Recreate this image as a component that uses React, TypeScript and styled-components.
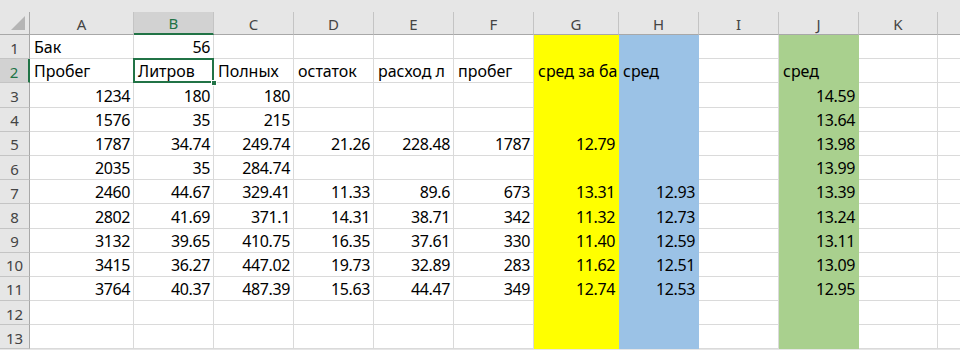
import React from "react";
import styled, { createGlobalStyle, css } from "styled-components";

const Global = createGlobalStyle`
  html, body { margin: 0; padding: 0; background: #ffffff; }
  body { font-family: "Noto Sans", "Open Sans", sans-serif; }
  * { box-sizing: border-box; }
`;

const GREEN = "#217346";
const GRID = "#dadada";
const HEAD_BG = "#e6e6e6";
const HEAD_SEL = "#d2d2d2";
const HEAD_LINE = "#c4c4c4";

const Sheet = styled.div`
  width: 960px;
  height: 350px;
  overflow: hidden;
  background: ${HEAD_BG};
  display: flex;
  flex-direction: column;
`;

const TopStrip = styled.div`
  height: 12px;
  flex: none;
  background: ${HEAD_BG};
`;

const Grid = styled.div`
  display: grid;
  grid-template-columns: 30px 104px 80px 80px 80px 80px 80px 85px 80px 80px 80px 79px 80px;
  grid-template-rows: 23px repeat(13, 24.2px);
  background: #ffffff;
`;

const Corner = styled.div`
  position: relative;
  background: ${HEAD_BG};
  border-right: 1px solid #a8a8a8;
  border-bottom: 1px solid #a8a8a8;
  &::after {
    content: "";
    position: absolute;
    right: 4px;
    bottom: 4px;
    width: 0;
    height: 0;
    border-left: 14px solid transparent;
    border-bottom: 14px solid #b5b5b5;
  }
`;

const ColHead = styled.div<{ $selected?: boolean }>`
  display: flex;
  align-items: center;
  justify-content: center;
  background: ${HEAD_BG};
  border-right: 1px solid ${HEAD_LINE};
  border-bottom: 1px solid #a8a8a8;
  color: #444444;
  font-size: 15px;
  padding-top: 1px;
  ${(p) =>
    p.$selected &&
    css`
      background: ${HEAD_SEL};
      color: ${GREEN};
      border-bottom: 2px solid ${GREEN};
    `}
`;

const RowHead = styled.div<{ $selected?: boolean }>`
  display: flex;
  align-items: center;
  justify-content: center;
  background: ${HEAD_BG};
  border-right: 1px solid #a8a8a8;
  border-bottom: 1px solid ${HEAD_LINE};
  color: #444444;
  font-size: 15px;
  padding-top: 2px;
  ${(p) =>
    p.$selected &&
    css`
      background: ${HEAD_SEL};
      color: ${GREEN};
      border-right: 2px solid ${GREEN};
    `}
`;

const Cell = styled.div<{ $num?: boolean; $fill?: string; $active?: boolean }>`
  position: relative;
  display: flex;
  align-items: flex-end;
  justify-content: ${(p) => (p.$num ? "flex-end" : "flex-start")};
  padding: 0 3px 0 4px;
  white-space: nowrap;
  overflow: ${(p) => (p.$active ? "visible" : "hidden")};
  font-size: 16px;
  letter-spacing: ${(p) => (p.$num ? "-0.4px" : "0")};
  line-height: 21px;
  color: #000000;
  background: ${(p) => p.$fill || "#ffffff"};
  border-right: 1px solid ${(p) => p.$fill || GRID};
  border-bottom: 1px solid ${(p) => p.$fill || GRID};
  ${(p) =>
    p.$active &&
    css`
      z-index: 2;
      &::before {
        content: "";
        position: absolute;
        left: -1px;
        top: -1px;
        right: -1px;
        bottom: -1px;
        border: 2px solid ${GREEN};
        pointer-events: none;
      }
    `}
`;

const FillHandle = styled.span`
  position: absolute;
  right: -4px;
  bottom: -4px;
  width: 6px;
  height: 6px;
  background: ${GREEN};
  border: 1px solid #ffffff;
  z-index: 3;
`;

const COLS = ["A", "B", "C", "D", "E", "F", "G", "H", "I", "J", "K", ""];
const FILLS: Record<number, string> = { 6: "#ffff00", 7: "#9bc2e6", 9: "#a9d08e" };

type V = string | number | null;
const rows: V[][] = [
  ["Бак", 56, null, null, null, null, null, null, null, null, null, null],
  ["Пробег", "Литров", "Полных", "остаток", "расход л", "пробег", "сред за ба", "сред", null, "сред", null, null],
  [1234, 180, 180, null, null, null, null, null, null, "14.59", null, null],
  [1576, 35, 215, null, null, null, null, null, null, "13.64", null, null],
  [1787, "34.74", "249.74", "21.26", "228.48", 1787, "12.79", null, null, "13.98", null, null],
  [2035, 35, "284.74", null, null, null, null, null, null, "13.99", null, null],
  [2460, "44.67", "329.41", "11.33", "89.6", 673, "13.31", "12.93", null, "13.39", null, null],
  [2802, "41.69", "371.1", "14.31", "38.71", 342, "11.32", "12.73", null, "13.24", null, null],
  [3132, "39.65", "410.75", "16.35", "37.61", 330, "11.40", "12.59", null, "13.11", null, null],
  [3415, "36.27", "447.02", "19.73", "32.89", 283, "11.62", "12.51", null, "13.09", null, null],
  [3764, "40.37", "487.39", "15.63", "44.47", 349, "12.74", "12.53", null, "12.95", null, null],
  [null, null, null, null, null, null, null, null, null, null, null, null],
  [null, null, null, null, null, null, null, null, null, null, null, null],
];

const isNum = (v: V) => typeof v === "number" || (typeof v === "string" && /^[\d.]+$/.test(v));

export default function App() {
  return (
    <>
      <Global />
      <Sheet>
        <TopStrip />
        <Grid>
          <Corner />
          {COLS.map((c, i) => (
            <ColHead key={"h" + i} $selected={c === "B"}>
              {c}
            </ColHead>
          ))}
          {rows.map((r, ri) => (
            <React.Fragment key={"r" + ri}>
              <RowHead $selected={ri === 1}>{ri + 1}</RowHead>
              {r.map((v, ci) => {
                const active = ri === 1 && ci === 1;
                return (
                  <Cell
                    key={ci}
                    $num={v !== null && isNum(v)}
                    $fill={FILLS[ci]}
                    $active={active}
                  >
                    {v}
                    {active && <FillHandle />}
                  </Cell>
                );
              })}
            </React.Fragment>
          ))}
        </Grid>
      </Sheet>
    </>
  );
}
